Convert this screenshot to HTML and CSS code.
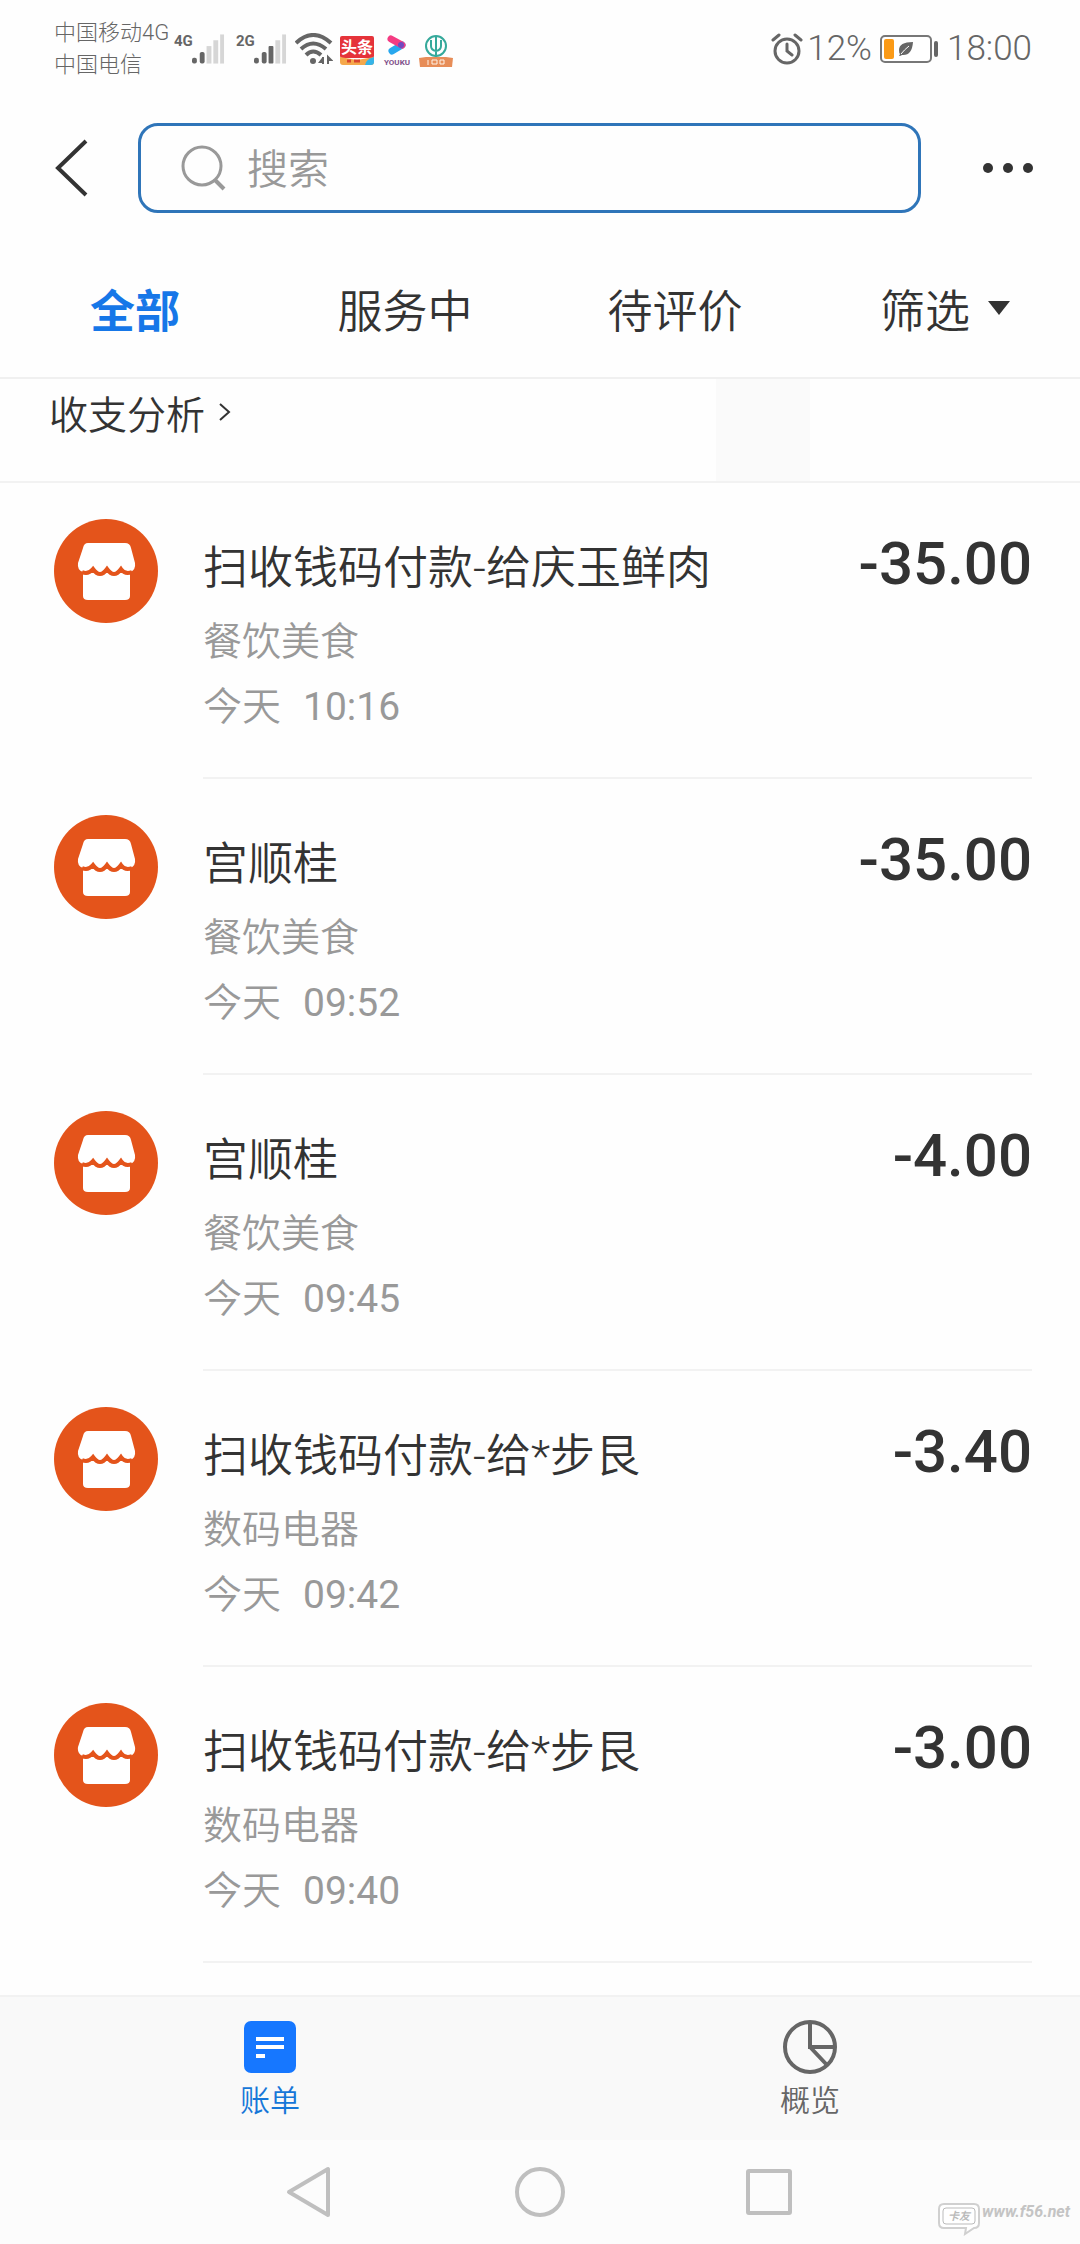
FILE: index.html
```html
<!DOCTYPE html>
<html lang="zh-CN">
<head>
<meta charset="utf-8">
<meta name="viewport" content="width=device-width, initial-scale=1">
<title>账单</title>
<link rel="stylesheet" href="styles.css">
</head>
<body>
<svg class="defs" aria-hidden="true">
  <symbol id="shop" viewBox="0 0 104 104">
    <circle cx="52" cy="52" r="52" fill="#e4541b"/>
    <path d="M34 24h37q5 0 6 5l4 15q1 7-5 9v24q0 4-5 4H34q-5 0-5-4V53q-6-2-5-9l5-15q1-5 5-5z" fill="#fff"/>
    <path d="M28 53q6 3 11-3 7 10 14 0 7 10 14 0 4 6 11 3" fill="none" stroke="#e4541b" stroke-width="4"/>
  </symbol>
</svg>

<header class="status">
  <div class="carriers"><span>中国移动4G</span><span>中国电信</span></div>
  <div class="signal"><b>4G</b>
    <svg width="34" height="32" viewBox="0 0 34 32"><g fill="#666"><rect x="0" y="25" width="5" height="6" rx="2"/><rect x="8" y="19" width="5" height="12" rx="2"/></g><g fill="#d6d6d6"><rect x="15" y="13" width="5" height="18"/><rect x="22" y="7" width="5" height="24"/><rect x="29" y="1" width="4" height="30"/></g></svg>
  </div>
  <div class="signal"><b>2G</b>
    <svg width="34" height="32" viewBox="0 0 34 32"><g fill="#666"><rect x="0" y="25" width="5" height="6" rx="2"/><rect x="8" y="19" width="5" height="12" rx="2"/><rect x="15" y="13" width="5" height="18" rx="1"/></g><g fill="#d6d6d6"><rect x="22" y="7" width="5" height="24"/><rect x="29" y="1" width="4" height="30"/></g></svg>
  </div>
  <svg class="wifi" width="38" height="32" viewBox="0 0 38 32"><g fill="none" stroke="#666" stroke-width="4"><path d="M1 10Q18-6 36 10"/><path d="M6 16q12-11 25 0"/><path d="M11 22q7-7 15 0"/></g><circle cx="18" cy="28" r="3" fill="#666"/><path d="M28 24v7M28 25l-3 4h4M33 31v-7l3 3h-3" fill="none" stroke="#666" stroke-width="2"/></svg>
  <svg class="app" width="36" height="30" viewBox="0 0 36 30"><rect width="34" height="22" rx="2" fill="#e5333a"/><path d="M0 21l17 3 17-3v5q0 3-3 3H3q-3 0-3-3z" fill="#f5a84b"/><path d="M25 29q1-6 9-8v5q0 3-3 3z" fill="#35b4e8"/><path d="M7 25h4M14 25h6" stroke="#d8442e" stroke-width="3"/><text x="17" y="17" text-anchor="middle" font-size="16" font-weight="700" fill="#fff">头条</text></svg>
  <svg class="app" width="28" height="32" viewBox="0 0 28 32"><path d="M6 4l12 6-12 6" fill="none"/><path d="M9 16l10-6" stroke="#27a7ee" stroke-width="7" stroke-linecap="round"/><path d="M8 4l11 6" stroke="#f43b82" stroke-width="7" stroke-linecap="round"/><circle cx="18" cy="10" r="3" fill="#704ac0"/><text x="14" y="30" text-anchor="middle" font-size="8" font-weight="700" fill="#80508a">YOUKU</text></svg>
  <svg class="app" width="36" height="34" viewBox="0 0 36 34"><circle cx="18" cy="12" r="10" fill="none" stroke="#35a99b" stroke-width="2"/><path d="M18 3v20M13 6v6q0 4 5 5M23 6v6q0 4-5 5" fill="none" stroke="#35a99b" stroke-width="2"/><path d="M1 24l7-1h20l7 1-1 9H2z" fill="#e78d58"/><path d="M10 26v5M14 26h5v4h-5zM22 26h4v4h-4z" fill="none" stroke="#fff3e8" stroke-width="1"/></svg>
  <div class="status-right">
    <svg width="32" height="32" viewBox="0 0 32 32" fill="none" stroke="#666"><circle cx="16" cy="18" r="12" stroke-width="3"/><path d="M16 11v7l5 4M2 7l6-5M30 7l-6-5" stroke-width="3" stroke-linecap="round"/></svg>
    <span class="pct">12%</span>
    <svg width="60" height="28" viewBox="0 0 60 28"><rect x="1" y="1" width="50" height="26" rx="4" fill="#fff" stroke="#777" stroke-width="2"/><rect x="4" y="4" width="10" height="20" rx="2" fill="#fb9a16"/><rect x="54" y="6" width="4" height="16" rx="2" fill="#666"/><path d="M33 7Q19 7 19 15q0 3 1 4l-1 2q2 0 3-1 10 1 11-13z" fill="#666"/><path d="M21 19q3-4 8-8" stroke="#fff" fill="none"/></svg>
    <span>18:00</span>
  </div>
</header>

<div class="topbar">
  <button class="back" aria-label="返回"><svg width="36" height="58" viewBox="0 0 36 58"><path d="M32 2L4 29l28 27" fill="none" stroke="#333" stroke-width="4"/></svg></button>
  <label class="search">
    <svg width="46" height="46" viewBox="0 0 46 46" fill="none" stroke="#999" stroke-width="3"><circle cx="21" cy="21" r="19"/><path d="M34 35l9 9" stroke-width="4"/></svg>
    <input type="search" placeholder="搜索" aria-label="搜索">
  </label>
  <button class="more" aria-label="更多"><svg width="52" height="12" viewBox="0 0 52 12" fill="#333"><circle cx="6" cy="6" r="5"/><circle cx="26" cy="6" r="5"/><circle cx="46" cy="6" r="5"/></svg></button>
</div>

<nav class="tabs">
  <button class="active">全部</button>
  <button>服务中</button>
  <button>待评价</button>
  <button>筛选<svg width="22" height="14" viewBox="0 0 22 14"><path d="M0 0h22L11 14z" fill="#333"/></svg></button>
</nav>

<main>
  <section class="analysis">
    <a href="#analysis">收支分析<svg width="12" height="20" viewBox="0 0 12 20"><path d="M1 2l9 8-9 8" fill="none" stroke="#333" stroke-width="2"/></svg></a>
    <span class="placeholder"></span>
  </section>
  <ul class="bills">
    <li><svg class="shop"><use href="#shop"/></svg><div class="bill"><div class="head"><h2>扫收钱码付款-给庆玉鲜肉</h2><strong>-35.00</strong></div><p>餐饮美食</p><p><span>今天</span><time>10:16</time></p></div></li>
    <li><svg class="shop"><use href="#shop"/></svg><div class="bill"><div class="head"><h2>宫顺桂</h2><strong>-35.00</strong></div><p>餐饮美食</p><p><span>今天</span><time>09:52</time></p></div></li>
    <li><svg class="shop"><use href="#shop"/></svg><div class="bill"><div class="head"><h2>宫顺桂</h2><strong>-4.00</strong></div><p>餐饮美食</p><p><span>今天</span><time>09:45</time></p></div></li>
    <li><svg class="shop"><use href="#shop"/></svg><div class="bill"><div class="head"><h2>扫收钱码付款-给*步艮</h2><strong>-3.40</strong></div><p>数码电器</p><p><span>今天</span><time>09:42</time></p></div></li>
    <li><svg class="shop"><use href="#shop"/></svg><div class="bill"><div class="head"><h2>扫收钱码付款-给*步艮</h2><strong>-3.00</strong></div><p>数码电器</p><p><span>今天</span><time>09:40</time></p></div></li>
  </ul>
</main>

<footer>
  <nav class="bottom">
    <a class="active" href="#bills"><svg width="56" height="56" viewBox="0 0 56 56"><rect x="2" y="2" width="52" height="52" rx="7" fill="#1677ff"/><path d="M14 20h28M14 28h28M14 37h9" stroke="#fff" stroke-width="4"/></svg><span>账单</span></a>
    <a href="#overview"><svg width="56" height="56" viewBox="0 0 56 56" fill="none" stroke="#666" stroke-width="4"><circle cx="28" cy="28" r="25"/><path d="M28 3v25h25M28 28l17 18"/></svg><span>概览</span></a>
  </nav>
  <div class="system">
    <button aria-label="后退"><svg width="52" height="52" viewBox="0 0 52 52"><path d="M43 3v46L4 26z"/></svg></button>
    <button aria-label="主屏幕"><svg width="52" height="52" viewBox="0 0 52 52"><circle cx="26" cy="26" r="23"/></svg></button>
    <button aria-label="最近任务"><svg width="52" height="52" viewBox="0 0 52 52"><rect x="5" y="5" width="42" height="42" rx="1"/></svg></button>
    <div class="watermark">
      <svg width="44" height="34" viewBox="0 0 44 34"><path d="M6 2h30q5 0 5 5v14q0 5-5 5l-9 6 1-6H6q-5 0-5-5V7q0-5 5-5z" fill="#fff" stroke="#d0d0d0" stroke-width="2"/><rect x="5" y="6" width="32" height="16" rx="3" fill="none" stroke="#bbb"/><text x="21" y="18" text-anchor="middle" font-size="11" font-weight="700" fill="#bbb">卡友</text></svg>
      <span>www.f56.net</span>
    </div>
  </div>
</footer>
</body>
</html>
```
FILE: styles.css
```css
* { box-sizing: border-box; margin: 0; padding: 0; }
body {
  min-height: 100vh;
  display: flex;
  flex-direction: column;
  background: #fefefe;
  color: #333;
  font-family: Roboto, "Noto Sans CJK SC", sans-serif;
  font-weight: 350;
}
button { border: 0; background: none; font: inherit; color: inherit; cursor: pointer; }
a { color: inherit; text-decoration: none; }
svg { display: block; flex: none; }
.defs { position: absolute; width: 0; height: 0; }

.status {
  display: flex;
  align-items: center;
  height: 98px;
  padding: 0 48px 0 54px;
  color: #666;
}
.carriers { display: flex; flex-direction: column; width: 117px; font-size: 22px; line-height: 32px; font-weight: 300; white-space: nowrap; }
.signal { display: flex; margin-left: 3px; width: 59px; height: 32px; }
.signal b { width: 18px; font-size: 15px; line-height: 16px; font-weight: 700; }
.signal svg { width: 33px; }
.app { margin: 4px 0 0 7px; }
.status-right { display: flex; align-items: center; margin-left: auto; font-size: 35px; line-height: 40px; }
.pct { margin: 0 8px 0 4px; }
.status-right span:last-child { margin-left: 7px; }

.topbar { display: flex; align-items: center; padding: 25px 46px 0 54px; }
.back { width: 84px; }
.search {
  flex: 1;
  display: flex;
  align-items: center;
  gap: 20px;
  height: 90px;
  padding: 0 40px;
  border: 3px solid #2f75b9;
  border-radius: 20px;
}
.search input { flex: 1; min-width: 0; padding-top: 4px; border: 0; outline: 0; background: none; font: inherit; font-size: 41px; color: #333; }
.search input::placeholder { color: #999; opacity: 1; }
.more { width: 113px; display: flex; justify-content: flex-end; }

.tabs { display: grid; grid-template-columns: repeat(4, 1fr); height: 166px; padding-top: 26px; border-bottom: 2px solid #f0f0f0; }
.tabs button { display: flex; align-items: center; justify-content: center; gap: 18px; font-size: 45px; }
.tabs .active { color: #1677e8; font-weight: 700; }

main { flex: 1; }
.analysis { display: flex; height: 104px; padding-left: 49px; border-bottom: 2px solid #f2f2f2; }
.analysis a { display: flex; align-items: center; gap: 14px; height: 66px; width: 667px; font-size: 39px; }
.placeholder { width: 94px; background: #fafafa; }

.bills { list-style: none; }
.bills li { display: flex; padding: 0 48px 0 54px; }
.shop { width: 104px; height: 104px; margin: 36px 45px 0 0; }
.bill { flex: 1; height: 296px; padding-top: 50px; border-bottom: 2px solid #f2f2f2; }
.head { display: flex; justify-content: space-between; height: 77px; }
h2 { font-size: 45px; line-height: 72px; font-weight: 350; }
strong { font-size: 60px; line-height: 62px; font-weight: 500; }
.bill p { display: flex; gap: 22px; font-size: 39px; line-height: 65px; color: #999; }
time { font-weight: 400; }

.bottom { display: grid; grid-template-columns: 1fr 1fr; height: 145px; background: #f9f9f9; border-top: 2px solid #f2f2f2; }
.bottom a { display: flex; flex-direction: column; align-items: center; gap: 4px; padding-top: 22px; font-size: 30px; line-height: 44px; color: #666; }
.bottom .active { color: #1677d8; }
.system { position: relative; display: flex; justify-content: center; gap: 177px; height: 104px; background: #fcfcfc; }
.system button svg { fill: none; stroke: #bfbfbf; stroke-width: 4; stroke-linejoin: round; }
.watermark { position: absolute; right: 10px; bottom: 8px; display: flex; color: #c4c4c4; font-size: 16px; line-height: 20px; font-weight: 700; font-style: italic; }
```
